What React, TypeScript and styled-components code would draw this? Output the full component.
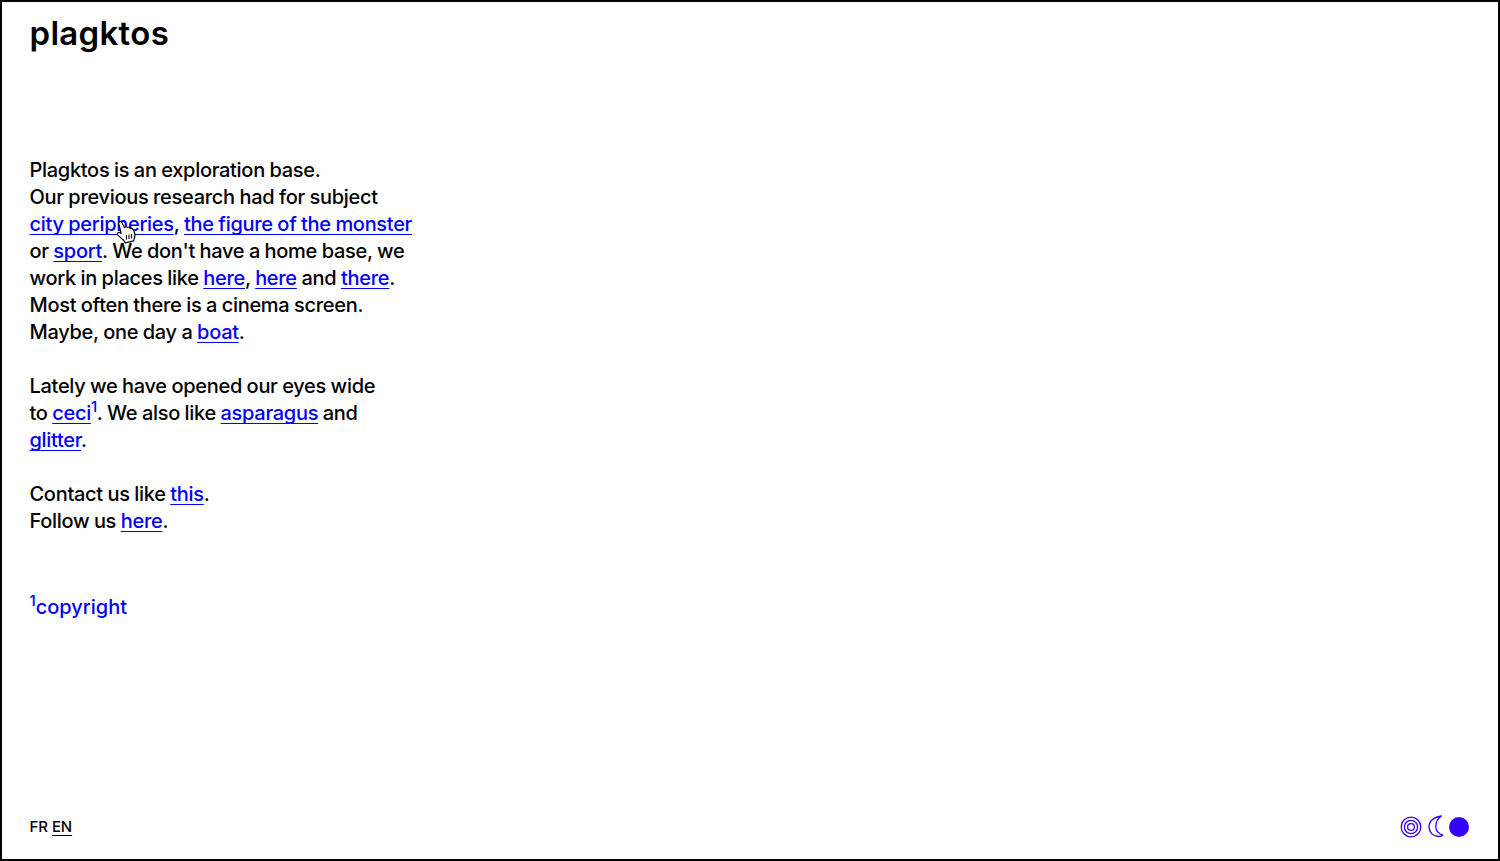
import React from "react";
import styled, { createGlobalStyle } from "styled-components";

const GlobalStyle = createGlobalStyle`
  html, body {
    margin: 0;
    padding: 0;
    background: #fff;
  }
`;

const HandCursor: React.FC = () => (
  <StyledCursor width="22" height="24" viewBox="0 0 22 24">
    <path
      d="M3.500 1.800c.9-.5 1.900-.1 2.400.8l2.600 5.200.3-.5c.6-.7 1.500-.8 2.200-.2l.5.6c.6-.6 1.600-.6 2.200 0l.5.7c.7-.4 1.600-.3 2.100.3.900 1 2 2.800 2.400 4.600.4 1.900.2 3.600-.4 5l-.6 2.600-8.500 2-1.300-2.400-5.800-5.100c-.8-.7-.9-1.700-.3-2.400.6-.7 1.500-.7 2.300-.2l1 .7L2.900 4.300c-.4-1-.2-2 .6-2.500z"
      fill="#fff"
      stroke="#000"
      strokeWidth="1.200"
      strokeLinejoin="round"
    />
    <path d="M10.500 15v4.500M13 14.500V19M15.500 14v4.500" stroke="#000" strokeWidth="1.100" />
  </StyledCursor>
);

const App: React.FC = () => {
  return (
    <StyledPage>
      <GlobalStyle />
      <StyledLogo>plagktos</StyledLogo>
      <StyledMain>
        <StyledParagraph>
          Plagktos is an exploration base.
          <br />
          Our previous research had for subject
          <br />
          <StyledCursorAnchor>
            <StyledLink href="#">city peripheries</StyledLink>
            <HandCursor />
          </StyledCursorAnchor>
          , <StyledLink href="#">the figure of the monster</StyledLink>
          <br />
          or <StyledLink href="#">sport</StyledLink>. We don't have a home base, we
          <br />
          work in places like <StyledLink href="#">here</StyledLink>,{" "}
          <StyledLink href="#">here</StyledLink> and <StyledLink href="#">there</StyledLink>.
          <br />
          Most often there is a cinema screen.
          <br />
          Maybe, one day a <StyledLink href="#">boat</StyledLink>.
        </StyledParagraph>
        <StyledParagraph>
          Lately we have opened our eyes wide
          <br />
          to <StyledLink href="#">ceci</StyledLink>
          <StyledSup>1</StyledSup>. We also like <StyledLink href="#">asparagus</StyledLink> and
          <br />
          <StyledLink href="#">glitter</StyledLink>.
        </StyledParagraph>
        <StyledParagraph>
          Contact us like <StyledLink href="#">this</StyledLink>.
          <br />
          Follow us <StyledLink href="#">here</StyledLink>.
        </StyledParagraph>
        <StyledNote>
          <StyledSup>1</StyledSup>copyright
        </StyledNote>
      </StyledMain>
      <StyledFooter>
        <StyledLangs>
          <span>FR</span>
          <StyledLangActive>EN</StyledLangActive>
        </StyledLangs>
        <StyledThemes>
          <svg width="22" height="22" viewBox="0 0 22 22" fill="none" stroke="#3300ff" strokeWidth="1.300">
            <circle cx="11" cy="11" r="9.800" />
            <circle cx="11" cy="11" r="6.600" />
            <circle cx="11" cy="11" r="3.400" />
          </svg>
          <svg width="16" height="23" viewBox="0 0 16 23" fill="none" stroke="#3300ff" strokeWidth="1.300">
            <path d="M13.500 1C6 1.800 1 6 1 12c0 5 4 9.500 9.500 9.500 1.700 0 3.200-.4 4.300-1.300C10.200 18.500 7.800 15.500 7.800 11.500c0-4.500 2.500-8.500 5.700-10.500z" strokeLinejoin="round" />
          </svg>
          <StyledDot />
        </StyledThemes>
      </StyledFooter>
    </StyledPage>
  );
};

const StyledPage = styled.div`
  box-sizing: border-box;
  display: flex;
  flex-direction: column;
  height: 100vh;
  border: 2px solid #000;
  padding: 0 29px 0 27.500px;
  font-family: Inter, "Liberation Sans", sans-serif;
  color: #000;
  overflow: hidden;
`;

const StyledLogo = styled.h1`
  margin: 11px 0 0;
  font-size: 33px;
  line-height: 40px;
  font-weight: 600;
  letter-spacing: 0.300px;
`;

const StyledMain = styled.main`
  flex: 1;
  margin-top: 104px;
  font-size: 20px;
  font-weight: 450;
  line-height: 27px;
  letter-spacing: -0.300px;
  word-spacing: -0.400px;
`;

const StyledParagraph = styled.p`
  margin: 0 0 27px;
`;

const StyledLink = styled.a`
  color: #0000ff;
  text-decoration: underline;
  text-decoration-thickness: 1px;
  text-decoration-skip-ink: none;
  text-underline-offset: 3px;
`;

const StyledCursorAnchor = styled.span`
  position: relative;
`;

const StyledCursor = styled.svg`
  position: absolute;
  left: 86px;
  top: 8px;
`;

const StyledSup = styled.sup`
  font-size: 15px;
  line-height: 0;
  color: #0000ff;
`;

const StyledNote = styled.p`
  position: relative;
  top: 1px;
  margin: 58px 0 0;
  color: #0000ff;
  letter-spacing: 0;
`;

const StyledFooter = styled.footer`
  display: flex;
  justify-content: space-between;
  align-items: center;
  padding-bottom: 21px;
`;

const StyledLangs = styled.div`
  display: flex;
  gap: 4px;
  font-size: 15px;
  font-weight: 500;
  line-height: 22px;
  letter-spacing: -0.100px;
`;

const StyledLangActive = styled.span`
  text-decoration: underline;
  text-underline-offset: 3px;
`;

const StyledThemes = styled.div`
  display: flex;
  align-items: center;
  gap: 5.500px;
`;

const StyledDot = styled.div`
  width: 20px;
  height: 20px;
  border-radius: 50%;
  background: #3300ff;
`;

export default App;
